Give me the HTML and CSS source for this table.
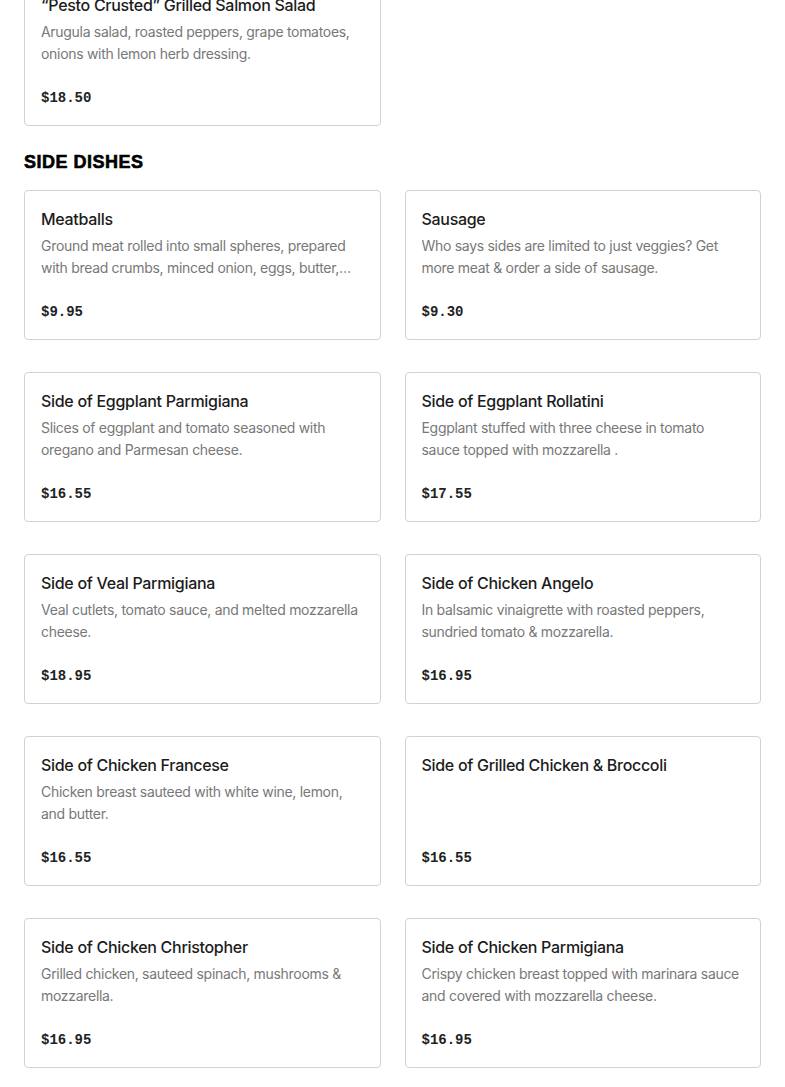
FILE: index.html
```html
<!DOCTYPE html>
<html>
<head>
<meta charset="utf-8">
<link rel="stylesheet" href="styles.css">
</head>
<body>
<div class="page">
  <div class="grid first">
    <div class="card">
      <div class="title">“Pesto Crusted” Grilled Salmon Salad</div>
      <div class="desc">Arugula salad, roasted peppers, grape tomatoes, onions with lemon herb dressing.</div>
      <div class="price">$18.50</div>
    </div>
  </div>
  <h2 class="section">SIDE DISHES</h2>
  <div class="grid">
    <div class="card">
      <div class="title">Meatballs</div>
      <div class="desc">Ground meat rolled into small spheres, prepared with bread crumbs, minced onion, eggs, butter, and seasoning.</div>
      <div class="price">$9.95</div>
    </div>
    <div class="card">
      <div class="title">Sausage</div>
      <div class="desc">Who says sides are limited to just veggies? Get more meat &amp; order a side of sausage.</div>
      <div class="price">$9.30</div>
    </div>
    <div class="card">
      <div class="title">Side of Eggplant Parmigiana</div>
      <div class="desc">Slices of eggplant and tomato seasoned with oregano and Parmesan cheese.</div>
      <div class="price">$16.55</div>
    </div>
    <div class="card">
      <div class="title">Side of Eggplant Rollatini</div>
      <div class="desc">Eggplant stuffed with three cheese in tomato sauce topped with mozzarella .</div>
      <div class="price">$17.55</div>
    </div>
    <div class="card">
      <div class="title">Side of Veal Parmigiana</div>
      <div class="desc">Veal cutlets, tomato sauce, and melted mozzarella cheese.</div>
      <div class="price">$18.95</div>
    </div>
    <div class="card">
      <div class="title">Side of Chicken Angelo</div>
      <div class="desc">In balsamic vinaigrette with roasted peppers, sundried tomato &amp; mozzarella.</div>
      <div class="price">$16.95</div>
    </div>
    <div class="card">
      <div class="title">Side of Chicken Francese</div>
      <div class="desc">Chicken breast sauteed with white wine, lemon, and butter.</div>
      <div class="price">$16.55</div>
    </div>
    <div class="card">
      <div class="title">Side of Grilled Chicken &amp; Broccoli</div>
      <div class="desc"></div>
      <div class="price">$16.55</div>
    </div>
    <div class="card">
      <div class="title">Side of Chicken Christopher</div>
      <div class="desc">Grilled chicken, sauteed spinach, mushrooms &amp; mozzarella.</div>
      <div class="price">$16.95</div>
    </div>
    <div class="card">
      <div class="title">Side of Chicken Parmigiana</div>
      <div class="desc">Crispy chicken breast topped with marinara sauce and covered with mozzarella cheese.</div>
      <div class="price">$16.95</div>
    </div>
  </div>
</div>
</body>
</html>
```
FILE: styles.css
```css
* { box-sizing: border-box; }
html, body { margin: 0; padding: 0; background: #fff; }
body { font-family: "Inter", "Liberation Sans", sans-serif; color: #222; }
.page { padding: 0 24px; }
.grid {
  display: grid;
  grid-template-columns: 1fr 1fr;
  column-gap: 24px;
  row-gap: 32px;
}
.grid.first { margin-top: -24px; }
.card {
  border: 1px solid #d2d2d2;
  border-radius: 4px;
  padding: 16px 16px 17px 16px;
  height: 150px;
  display: flex;
  flex-direction: column;
  background: #fff;
}
.title {
  font-size: 16px;
  font-weight: 500;
  line-height: 24px;
  letter-spacing: -0.3px;
  color: #1c1c1c;
  white-space: nowrap;
}
.desc {
  margin-top: 4px;
  font-size: 14px;
  line-height: 22px;
  letter-spacing: -0.3px;
  color: #787878;
  height: 44px;
  overflow: hidden;
  display: -webkit-box;
  -webkit-line-clamp: 2;
  -webkit-box-orient: vertical;
}
.price {
  margin-top: auto;
  font-family: "Liberation Mono", monospace;
  font-weight: 700;
  font-size: 14px;
  line-height: 20px;
  color: #222;
}
.section {
  margin: 24px 0 16px;
  font-family: "Liberation Sans", Arial, sans-serif;
  font-weight: 700;
  font-size: 18px;
  line-height: 24px;
  color: #000;
  letter-spacing: 0.5px;
  -webkit-text-stroke: 0.6px #000;
}
```
